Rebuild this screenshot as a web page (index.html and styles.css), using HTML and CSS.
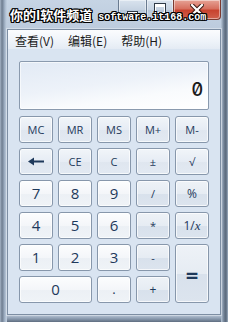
FILE: index.html
```html
<!DOCTYPE html>
<html lang="zh">
<head>
<meta charset="utf-8">
<title>计算器</title>
<link rel="stylesheet" href="styles.css">
</head>
<body>
<div class="window">
  <div class="titlebar">
    <div class="app-icon"></div>
    <div class="caption">
      <div class="cap cap-min"><span class="min-glyph"></span></div>
      <div class="cap cap-max"><span class="max-glyph"></span></div>
      <div class="cap cap-close">
        <svg width="14" height="12" viewBox="0 0 14 12">
          <path d="M2 1 L12 11 M12 1 L2 11" stroke="#3a1a14" stroke-width="4.2" stroke-linecap="square"/>
          <path d="M2 1 L12 11 M12 1 L2 11" stroke="#ffffff" stroke-width="2.2" stroke-linecap="square"/>
        </svg>
      </div>
    </div>
    <div class="watermark"><span class="wm-cn">你的I软件频道</span><span class="wm-en">software.it168.com</span></div>
  </div>
  <div class="client">
    <div class="menubar">
      <span class="menu-item">查看(V)</span>
      <span class="menu-item">编辑(E)</span>
      <span class="menu-item">帮助(H)</span>
    </div>
    <div class="calc">
      <div class="display"><span class="readout">0</span></div>
      <div class="keys">
        <button class="key fn">MC</button>
        <button class="key fn">MR</button>
        <button class="key fn">MS</button>
        <button class="key fn">M+</button>
        <button class="key fn">M-</button>

        <button class="key fn" aria-label="Backspace">
          <svg width="16" height="9" viewBox="0 0 16 9"><path d="M0 4.5 L6 0.5 L6 3.5 L16 3.5 L16 5.5 L6 5.5 L6 8.5 Z" fill="#1e395b"/></svg>
        </button>
        <button class="key fn">CE</button>
        <button class="key fn">C</button>
        <button class="key fn">±</button>
        <button class="key fn">√</button>

        <button class="key num">7</button>
        <button class="key num">8</button>
        <button class="key num">9</button>
        <button class="key op small">/</button>
        <button class="key op">%</button>

        <button class="key num">4</button>
        <button class="key num">5</button>
        <button class="key num">6</button>
        <button class="key op small">*</button>
        <button class="key op">1/<i class="ix">x</i></button>

        <button class="key num">1</button>
        <button class="key num">2</button>
        <button class="key num">3</button>
        <button class="key op small">-</button>
        <button class="key op equals">=</button>

        <button class="key num zero">0</button>
        <button class="key num small">.</button>
        <button class="key op">+</button>
      </div>
    </div>
  </div>
</div>
</body>
</html>
```

FILE: styles.css
```css
* { box-sizing: border-box; }

html, body {
  margin: 0;
  padding: 0;
}

body {
  width: 228px;
  height: 322px;
  overflow: hidden;
  background: #b8c7d9;
}

.window {
  width: 228px;
  height: 322px;
  display: flex;
  flex-direction: column;
  background:
    linear-gradient(to right, #a5b4c6 0, #6f7d8f 2px, #7f8fa3 3px, #a8b8cb 5px, #c3d1e1 7px, transparent 7px) left top / 7px 100% no-repeat,
    linear-gradient(to left, #9fafc2 0, #59687a 2px, #6f7f93 4px, #b8c7d8 7px, transparent 7px) right top / 7px 100% no-repeat,
    linear-gradient(to top, #5e6d80 0, #8797ab 3px, #b9c7d8 7px) left bottom / 100% 7px no-repeat,
    linear-gradient(#c6d4e4, #bccbdd 30px, #b6c6d8);
}

/* ---------- title bar ---------- */
.titlebar {
  position: relative;
  height: 29px;
  flex: none;
  display: flex;
  justify-content: space-between;
  align-items: flex-start;
  padding: 0 7px 0 10px;
}

.app-icon {
  margin-top: 10px;
  width: 10px;
  height: 11px;
  background: linear-gradient(#cfe0f3, #8fb2da);
  border: 1px solid #5d7da4;
}

.caption {
  display: flex;
  height: 20px;
}

.cap {
  height: 20px;
  display: flex;
  align-items: center;
  justify-content: center;
  border: 1px solid #6a7b90;
  border-top: none;
  box-shadow: inset 0 0 0 1px rgba(255, 255, 255, 0.45);
}

.cap-min {
  width: 28px;
  border-right: none;
  border-bottom-left-radius: 4px;
  background: linear-gradient(#d9e3ee, #c6d3e2 50%, #b7c7d9 51%, #c5d3e3);
}

.cap-max {
  width: 27px;
  border-right: none;
  background: linear-gradient(#d9e3ee, #c6d3e2 50%, #b7c7d9 51%, #c5d3e3);
}

.cap-close {
  width: 48px;
  border-color: #7c3a30;
  border-bottom-right-radius: 4px;
  background: linear-gradient(#e6a396, #d7705f 45%, #c8432f 55%, #d0604c);
}

.min-glyph {
  width: 9px;
  height: 3px;
  margin-top: 7px;
  background: #ffffff;
  outline: 1px solid #2f3a47;
}

.max-glyph {
  width: 10px;
  height: 9px;
  margin-top: -2px;
  border: 1px solid #ffffff;
  border-top-width: 3px;
  outline: 1px solid #2f3a47;
}

.watermark {
  position: absolute;
  left: 10px;
  top: 8px;
  display: flex;
  align-items: baseline;
  gap: 6px;
  color: #ffffff;
  white-space: nowrap;
  text-shadow:
    1px 0 #000, -1px 0 #000, 0 1px #000, 0 -1px #000,
    1px 1px #000, -1px -1px #000, 1px -1px #000, -1px 1px #000;
}

.wm-cn {
  font-family: "Noto Sans CJK SC", "Noto Sans", sans-serif;
  font-size: 13px;
  line-height: 14px;
  font-weight: 700;
}

.wm-en {
  font-family: "Liberation Mono", monospace;
  font-size: 10px;
  line-height: 12px;
  font-weight: 700;
}

/* ---------- client ---------- */
.client {
  flex: none;
  margin: 0 7px;
  height: 286px;
  display: flex;
  flex-direction: column;
  border: 1px solid #7d8ea3;
  box-shadow: 0 0 0 1px rgba(255, 255, 255, 0.35);
  background: #d9e4f1;
}

.menubar {
  height: 19px;
  flex: none;
  display: flex;
  align-items: center;
  padding: 1px 0 0 0;
  background: linear-gradient(#fbfcfe, #eef3f9 60%, #e4ebf4);
  font-family: "Noto Sans CJK SC", "Noto Sans", sans-serif;
  font-size: 12px;
  color: #1b1b1b;
}

.menu-item {
  padding: 0 7px;
  line-height: 17px;
}

.calc {
  flex: 1;
  display: flex;
  flex-direction: column;
  padding: 12px 11px 11px;
}

.display {
  height: 49px;
  margin-bottom: 6px;
  border: 1px solid #8a9aae;
  border-radius: 2px;
  background: linear-gradient(172deg, #e2eaf5 0%, #edf2f9 45%, #f9fbfd 70%, #ffffff 100%);
  box-shadow: inset 0 0 0 1px rgba(255, 255, 255, 0.6);
  display: flex;
  justify-content: flex-end;
  align-items: flex-end;
  padding: 0 5px 9px 0;
}

.readout {
  font-family: Inter, "DejaVu Sans Mono", monospace;
  font-feature-settings: "zero" 1;
  font-size: 18px;
  font-weight: 500;
  line-height: 20px;
  color: #1a1a1a;
}

.keys {
  display: grid;
  grid-template-columns: repeat(5, 34px);
  grid-auto-rows: 27px;
  gap: 5px;
}

.key {
  margin: 0;
  padding: 0;
  display: flex;
  align-items: center;
  justify-content: center;
  border: 1px solid #8797ab;
  border-radius: 3px;
  box-shadow: inset 0 0 0 1px rgba(255, 255, 255, 0.7);
  font-family: "Open Sans", "Noto Sans", sans-serif;
  font-size: 11px;
  line-height: 1;
  color: #1e395b;
}

.fn {
  background: linear-gradient(#f1f5f9, #e6ecf4 50%, #dfe6ef 51%, #e2e9f2);
}

.num {
  font-size: 15px;
  background: linear-gradient(#fcfdfe, #f4f6f9 50%, #ecf0f5 51%, #eff3f7);
}

.op {
  background: linear-gradient(#eef2f7, #e6ecf3 50%, #d8e1ec 51%, #dce4ee);
  font-size: 12px;
}

.small {
  font-size: 11px;
}

.num.small {
  font-size: 13px;
}

.ix {
  font-family: "Liberation Serif", serif;
  font-size: 13px;
}

.equals {
  grid-row: span 2;
  font-size: 22px;
  font-weight: 700;
}

.zero {
  grid-column: span 2;
}
```
